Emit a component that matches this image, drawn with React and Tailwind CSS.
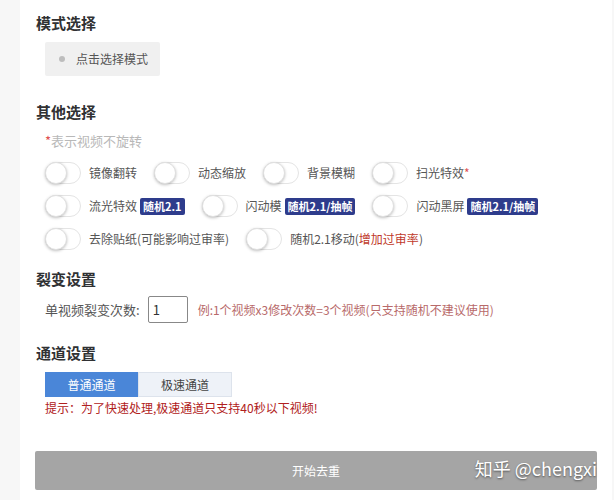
import React from 'react';

const Toggle = () => (
    <span className="relative inline-block w-[36px] h-[22px] rounded-full border border-[#e4e4e4] bg-white shrink-0">
        <span className="absolute left-[-1px] top-[-1px] w-[22px] h-[22px] rounded-full bg-white border border-[#e0e0e0] shadow-[0_1px_3px_rgba(0,0,0,0.25)]"></span>
    </span>
);

const Badge = ({ children }) => (
    <span className="ml-[3px] inline-flex items-center h-[17px] px-[3px] rounded-[2px] bg-[#2e3c8c] text-white text-[11px] font-bold leading-none">
        {children}
    </span>
);

const Option = ({ label, badge, children }) => (
    <div className="flex items-center mr-[17px]">
        <Toggle />
        <span className="ml-[8px] text-[12px] text-[#555]">{label}</span>
        {badge && <Badge>{badge}</Badge>}
        {children}
    </div>
);

const Heading = ({ children, className }) => (
    <h3 className={`text-[15px] font-bold text-[#303133] leading-none ${className || ''}`}>{children}</h3>
);

export default function App() {
    return (
        <div
            className="w-[614px] h-[500px] overflow-hidden flex bg-[#f7f7f7]"
            style={{ fontFamily: '"Noto Sans CJK SC", "Noto Sans", sans-serif' }}
        >
            <div className="w-[20px] shrink-0"></div>
            <div className="w-[592px] bg-white pl-[16px] pr-[15px] pt-[15px] relative">
                <Heading>模式选择</Heading>
                <div className="ml-[9px] mt-[12px] w-[115px] h-[34px] bg-[#f0f0f0] rounded-[2px] flex items-center pl-[14px]">
                    <span className="w-[6px] h-[6px] rounded-full bg-[#bdbdbd]"></span>
                    <span className="ml-[11px] text-[12px] text-[#555]">点击选择模式</span>
                </div>

                <Heading className="mt-[28px]">其他选择</Heading>
                <div className="ml-[9px] mt-[15px] text-[13px] text-[#b8b8b8] leading-none">
                    <span className="text-[#e05050]">*</span>表示视频不旋转
                </div>

                <div className="ml-[9px] mt-[15px] flex flex-col gap-[11px]">
                    <div className="flex items-center">
                        <Option label="镜像翻转" />
                        <Option label="动态缩放" />
                        <Option label="背景模糊" />
                        <Option label="扫光特效">
                            <span className="text-[12px] text-[#e05050]">*</span>
                        </Option>
                    </div>
                    <div className="flex items-center">
                        <Option label="流光特效" badge="随机2.1" />
                        <Option label="闪动模" badge="随机2.1/抽帧" />
                        <Option label="闪动黑屏" badge="随机2.1/抽帧" />
                    </div>
                    <div className="flex items-center">
                        <Option label="去除贴纸(可能影响过审率)" />
                        <Option label="随机2.1移动">
                            <span className="text-[12px] text-[#555]">(</span>
                            <span className="text-[12px] text-[#c0392b]">增加过审率</span>
                            <span className="text-[12px] text-[#555]">)</span>
                        </Option>
                    </div>
                </div>

                <Heading className="mt-[21px]">裂变设置</Heading>
                <div className="ml-[9px] mt-[10px] flex items-center">
                    <span className="text-[13px] text-[#555]">单视频裂变次数:</span>
                    <div className="ml-[8px] w-[40px] h-[27px] border border-[#888] rounded-[2px] flex items-center pl-[4px] text-[13px] text-[#333]">1</div>
                    <span className="ml-[10px] text-[12px] text-[#b86a6a]">例:1个视频x3修改次数=3个视频(只支持随机不建议使用)</span>
                </div>

                <Heading className="mt-[22px]">通道设置</Heading>
                <div className="ml-[9px] mt-[12px] flex">
                    <div className="w-[93px] h-[25px] bg-[#4a86d8] text-white text-[12px] flex items-center justify-center">普通通道</div>
                    <div className="w-[94px] h-[25px] bg-[#eef2f8] border border-[#dde3ec] text-[#444] text-[12px] flex items-center justify-center">极速通道</div>
                </div>
                <div className="ml-[9px] mt-[2px] text-[12px] text-[#b02020] leading-[18px]">提示：为了快速处理,极速通道只支持40秒以下视频!</div>

                <div className="relative -ml-[1px] mt-[34px] w-[562px] h-[39px] bg-[#a5a5a5] rounded-[2px] flex items-center justify-center">
                    <span className="text-[12px] text-white">开始去重</span>
                    <span
                        className="absolute right-[0px] top-[8px] text-[18px] text-white leading-none [text-shadow:0_1px_2px_rgba(0,0,0,0.5)]"
                    >
                        知乎 @chengxi
                    </span>
                </div>
            </div>
            <div className="w-[2px] shrink-0"></div>
        </div>
    );
}
